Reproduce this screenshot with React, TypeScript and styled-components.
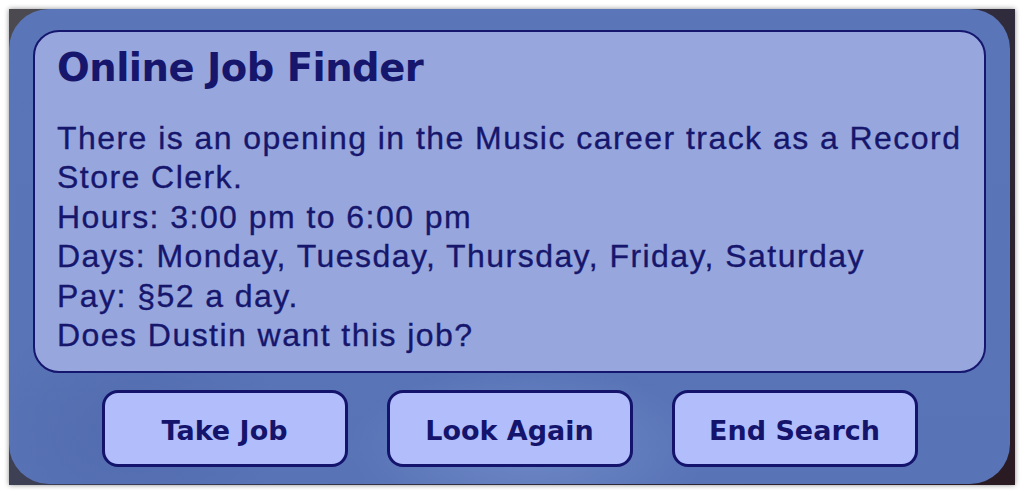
import styled, { createGlobalStyle } from 'styled-components';

const GlobalStyle = createGlobalStyle`
  html, body {
    margin: 0;
    padding: 0;
    background: #ffffff;
  }
`;

const Frame = styled.div`
  margin: 9px;
  width: 1006px;
  height: 476px;
  box-sizing: border-box;
  padding: 0 5px 1px 0;
  background: linear-gradient(135deg, #4c4a50 0%, #3a3d55 40%, #2f2a3a 70%, #2a1a22 100%);
  box-shadow: 0 0 5px rgba(0, 0, 0, 0.45);
`;

const Panel = styled.div`
  height: 100%;
  box-sizing: border-box;
  border-radius: 40px;
  padding: 21px 24px 16px 24px;
  display: flex;
  flex-direction: column;
  background:
    radial-gradient(ellipse 260px 120px at 520px 440px, rgba(150, 175, 225, 0.35), transparent 70%),
    radial-gradient(ellipse 220px 160px at 120px 420px, rgba(70, 95, 160, 0.35), transparent 70%),
    linear-gradient(180deg, #5b76b8 0%, #5a75b7 60%, #5873b6 100%);
`;

const Message = styled.div`
  height: 343px;
  box-sizing: border-box;
  border: 2px solid #15166e;
  border-radius: 26px;
  background: #97a7dd;
  padding: 12px 22px 0 22px;
  color: #16166d;
`;

const Title = styled.h1`
  margin: 0 0 27px 0;
  font-family: 'DejaVu Sans', 'Open Sans', sans-serif;
  font-weight: bold;
  font-size: 38.5px;
  line-height: 48px;
  letter-spacing: -0.5px;
`;

const Body = styled.p`
  margin: 0;
  font-family: 'Liberation Sans', Arial, sans-serif;
  font-size: 32px;
  line-height: 39.4px;
  letter-spacing: 1.45px;
  -webkit-text-stroke: 0.35px #16166d;
  white-space: nowrap;
`;

const Buttons = styled.div`
  margin-top: 17px;
  display: flex;
  justify-content: center;
  gap: 39px;
`;

const Button = styled.button`
  width: 246px;
  height: 77px;
  box-sizing: border-box;
  border: 3px solid #14146c;
  border-radius: 16px;
  background: #b1befb;
  color: #14146c;
  font-family: 'DejaVu Sans', 'Open Sans', sans-serif;
  font-weight: bold;
  font-size: 27px;
  padding: 4px 0 0 0;
  cursor: pointer;
`;

export default function App() {
  return (
    <>
      <GlobalStyle />
      <Frame>
        <Panel>
          <Message>
            <Title>Online Job Finder</Title>
            <Body>
              There is an opening in the Music career track as a Record
              <br />
              Store Clerk.
              <br />
              Hours: 3:00 pm to 6:00 pm
              <br />
              Days: Monday, Tuesday, Thursday, Friday, Saturday
              <br />
              Pay: §52 a day.
              <br />
              Does Dustin want this job?
            </Body>
          </Message>
          <Buttons>
            <Button>Take Job</Button>
            <Button>Look Again</Button>
            <Button>End Search</Button>
          </Buttons>
        </Panel>
      </Frame>
    </>
  );
}
